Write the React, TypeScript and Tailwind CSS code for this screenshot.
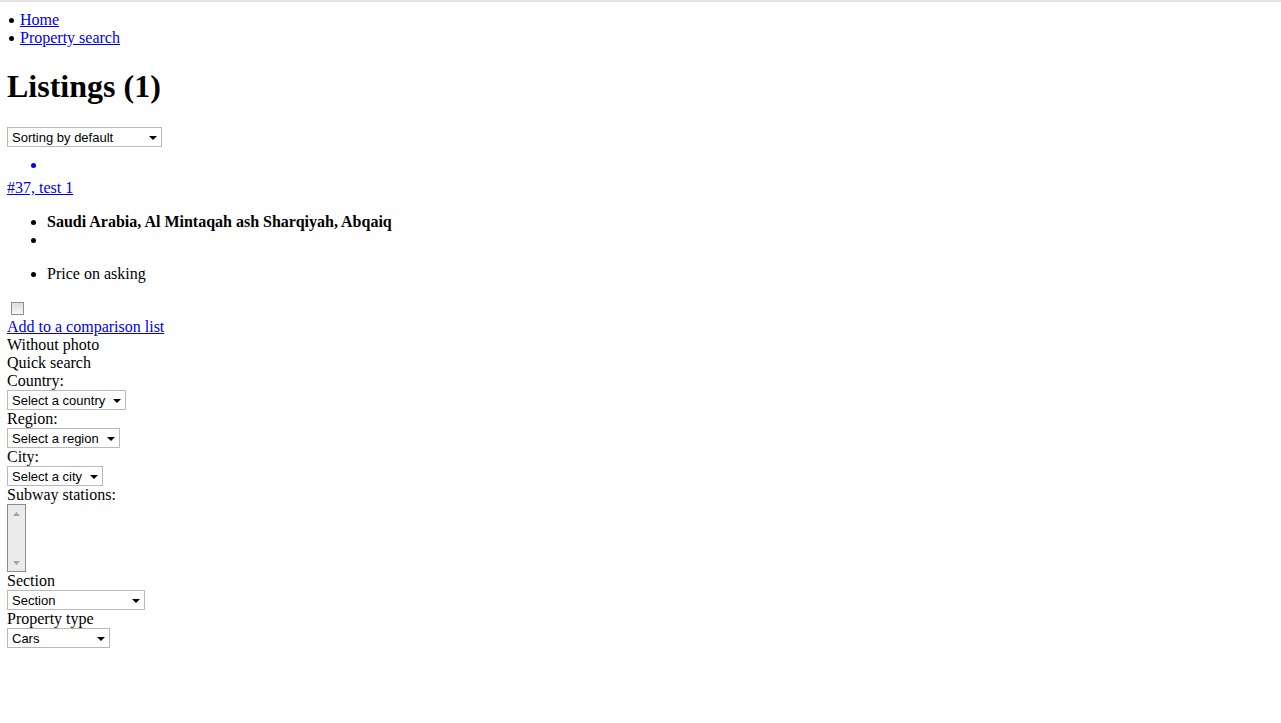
import React from 'react'

function Caret() {
  return (
    <svg width="8" height="4" viewBox="0 0 8 4" className="absolute right-[4px] top-[8px]">
      <path d="M0 0 L8 0 L4 4 Z" fill="#000" />
    </svg>
  )
}

function FakeSelect({ label, width }: { label: string; width: string }) {
  return (
    <div className={`relative h-[20px] ${width} border border-[#b9b9b9] bg-white`}>
      <span className="block pl-[4px] pt-[1px] font-['Liberation_Sans',sans-serif] text-[13px] leading-[18px] text-black">
        {label}
      </span>
      <Caret />
    </div>
  )
}

function NavItem({ label }: { label: string }) {
  return (
    <li className="flex items-center">
      <span className="ml-[2px] mr-[6px] h-[5px] w-[5px] rounded-full bg-black"></span>
      <a href="#" className="text-[#0000ee] underline">{label}</a>
    </li>
  )
}

export default function App() {
  return (
    <div className="min-h-screen bg-white font-['Liberation_Serif',serif] text-[16px] leading-[18px] text-black">
      <div className="h-[2px] bg-[#e2e2e2]"></div>
      <div className="px-[7px]">
        <ul className="mt-[9px]">
          <NavItem label="Home" />
          <NavItem label="Property search" />
        </ul>

        <h1 className="mt-[21px] mb-[22px] text-[32px] font-bold leading-[37px]">Listings (1)</h1>

        <FakeSelect label="Sorting by default" width="w-[155px]" />

        <ul className="mt-[9px] list-disc pl-[40px] text-[#0000ee]">
          <li>&nbsp;</li>
        </ul>

        <a href="#" className="mt-[5px] block w-fit text-[#0000ee] underline">#37, test 1</a>

        <ul className="mt-[16px] list-disc pl-[40px]">
          <li className="font-bold">Saudi Arabia, Al Mintaqah ash Sharqiyah, Abqaiq</li>
          <li>&nbsp;</li>
          <li className="mt-[16px]">Price on asking</li>
        </ul>

        <div className="mt-[16px] h-[19px] pl-[4px] pt-[3px]">
          <div className="h-[13px] w-[13px] border border-[#8f8f8f] bg-gradient-to-b from-[#dcdcdc] to-[#f7f7f7]"></div>
        </div>

        <a href="#" className="block w-fit text-[#0000ee] underline">Add to a comparison list</a>
        <div>Without photo</div>
        <div>Quick search</div>
        <div>Country:</div>
        <FakeSelect label="Select a country" width="w-[119px]" />
        <div>Region:</div>
        <FakeSelect label="Select a region" width="w-[113px]" />
        <div>City:</div>
        <FakeSelect label="Select a city" width="w-[96px]" />
        <div>Subway stations:</div>
        <div className="relative h-[68px] w-[19px] border border-[#8c8c8c] bg-[#ebebeb]">
          <svg width="7" height="4" viewBox="0 0 7 4" className="absolute left-[5px] top-[7px]">
            <path d="M0 4 L7 4 L3.5 0 Z" fill="#a3a3a3" />
          </svg>
          <svg width="7" height="4" viewBox="0 0 7 4" className="absolute left-[5px] bottom-[6px]">
            <path d="M0 0 L7 0 L3.5 4 Z" fill="#a3a3a3" />
          </svg>
        </div>
        <div>Section</div>
        <FakeSelect label="Section" width="w-[138px]" />
        <div>Property type</div>
        <FakeSelect label="Cars" width="w-[103px]" />
      </div>
    </div>
  )
}
